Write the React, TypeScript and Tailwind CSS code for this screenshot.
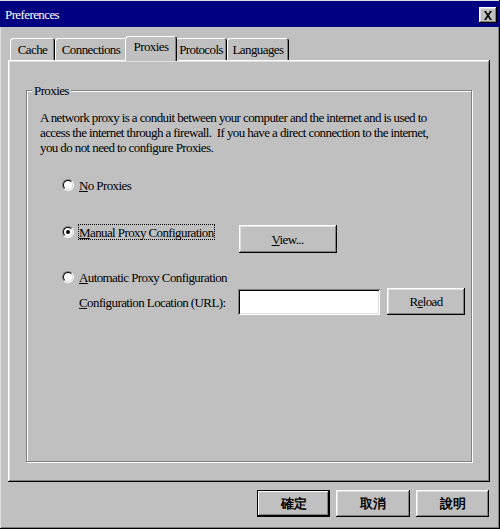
import React from "react";

const raised =
  "shadow-[inset_-1px_-1px_0_#000,inset_1px_1px_0_#fff,inset_-2px_-2px_0_#808080,inset_2px_2px_0_#dfdfdf]";

function Radio({ checked }: { checked?: boolean }) {
  return (
    <div className="w-[12px] h-[12px] rounded-full border border-t-[#808080] border-l-[#808080] border-r-white border-b-white shrink-0">
      <div className="w-full h-full rounded-full border border-t-black border-l-black border-r-[#dfdfdf] border-b-[#dfdfdf] bg-white flex items-center justify-center">
        {checked && <div className="w-[4px] h-[4px] rounded-full bg-black" />}
      </div>
    </div>
  );
}

function Tab({ label, w, selected }: { label: string; w: string; selected?: boolean }) {
  if (selected) {
    return (
      <div
        className={`${w} h-[25px] -mx-[2px] -mb-[1px] relative z-10 bg-[#c0c0c0] rounded-t-[3px] shadow-[inset_1px_1px_0_#fff,inset_-1px_0_0_#000,inset_-2px_0_0_#808080] flex items-start justify-center pt-[3px] text-[13px] leading-[15px] text-black`}
      >
        {label}
      </div>
    );
  }
  return (
    <div
      className={`${w} h-[22px] bg-[#c0c0c0] rounded-t-[3px] shadow-[inset_1px_1px_0_#fff,inset_-1px_0_0_#000,inset_-2px_0_0_#808080] flex items-start justify-center pt-[4px] text-[13px] leading-[15px] text-black`}
    >
      {label}
    </div>
  );
}

function Button({ children, className = "", def }: { children: React.ReactNode; className?: string; def?: boolean }) {
  return (
    <div
      className={`bg-[#c0c0c0] flex items-center justify-center text-black ${
        def
          ? "shadow-[inset_0_0_0_1px_#000,inset_-2px_-2px_0_#000,inset_2px_2px_0_#fff,inset_-3px_-3px_0_#808080]"
          : raised
      } ${className}`}
    >
      {children}
    </div>
  );
}

export default function App() {
  return (
    <div className="w-[500px] h-[529px] bg-[#c0c0c0] flex flex-col font-[family-name:Liberation_Serif,serif] tracking-[-0.6px] shadow-[inset_-1px_-1px_0_#000,inset_1px_1px_0_#dfdfdf,inset_-2px_-2px_0_#808080] overflow-hidden">
      {/* Title bar */}
      <div className="h-[26px] mt-[1px] bg-[#000080] flex items-center justify-between pl-[5px] pr-[3px] shrink-0">
        <span className="text-white text-[13px] leading-[15px]">Preferences</span>
        <div className={`w-[18px] h-[16px] mt-[2px] ${raised} bg-[#c0c0c0] flex items-center justify-center`}>
          <svg width="10" height="9" viewBox="0 0 10 9">
            <path d="M1 0h2l2 3 2-3h2L6 4.5 9 9H7L5 6 3 9H1l3-4.5z" fill="#000" />
          </svg>
        </div>
      </div>

      {/* Tabs */}
      <div className="flex items-end h-[24px] mt-[9px] ml-[10px] relative z-10">
        <Tab label="Cache" w="w-[45px]" />
        <Tab label="Connections" w="w-[72px]" />
        <Tab label="Proxies" w="w-[52px]" selected />
        <Tab label="Protocols" w="w-[52px]" />
        <Tab label="Languages" w="w-[62px]" />
      </div>

      {/* Panel */}
      <div className={`ml-[8px] w-[482px] h-[422px] bg-[#c0c0c0] ${raised} pt-[30px] px-[18px] shrink-0`}>
        <div className="relative h-[372px] border border-[#808080] shadow-[1px_1px_0_#fff,inset_1px_1px_0_#fff] pt-[19px] pl-[13px] text-black">
          <div className="absolute -top-[8px] left-[5px] bg-[#c0c0c0] px-[2px] text-[13px] leading-[15px]">
            Proxies
          </div>
          <p className="text-[13px] leading-[15px] w-[400px]">
            A network proxy is a conduit between your computer and the internet and is used to access the internet
            through a firewall.&nbsp; If you have a direct connection to the internet, you do not need to configure
            Proxies.
          </p>

          <div className="ml-[22px] text-[13px] leading-[15px]">
            <div className="flex items-center h-[20px] mt-[20px]">
              <Radio />
              <span className="ml-[5px]">
                <u>N</u>o Proxies
              </span>
            </div>

            <div className="flex items-start h-[29px] mt-[29px]">
              <div className="h-[16px] flex items-center">
                <Radio checked />
              </div>
              <span className="ml-[4px] h-[16px] px-[1px] outline-1 outline-dotted outline-black -outline-offset-1 flex items-center">
                <u>M</u>anual Proxy Configuration
              </span>
              <Button className="ml-[24px] mt-[1px] w-[98px] h-[28px]">
                <span>
                  <u>V</u>iew...
                </span>
              </Button>
            </div>

            <div className="flex items-center h-[16px] mt-[16px]">
              <Radio />
              <span className="ml-[5px]">
                <u>A</u>utomatic Proxy Configuration
              </span>
            </div>

            <div className="flex items-start h-[27px] mt-[3px]">
              <span className="ml-[17px] mt-[7px] whitespace-nowrap">
                <u>C</u>onfiguration Location (URL):
              </span>
              <div className="ml-auto" />
              <div className="w-[142px] h-[26px] mt-[1px] shrink-0 bg-white shadow-[inset_1px_1px_0_#808080,inset_-1px_-1px_0_#fff,inset_2px_2px_0_#000,inset_-2px_-2px_0_#dfdfdf]" />
              <Button className="ml-[7px] w-[78px] h-[27px] mr-[6px] shrink-0">
                <span>
                  R<u>e</u>load
                </span>
              </Button>
            </div>
          </div>
        </div>
      </div>

      {/* Bottom buttons */}
      <div className="flex justify-end gap-[6px] mt-[8px] pr-[11px] font-sans tracking-normal text-[13px] font-bold">
        <Button def className="w-[73px] h-[27px]">確定</Button>
        <Button className="w-[74px] h-[27px]">取消</Button>
        <Button className="w-[73px] h-[27px]">說明</Button>
      </div>
    </div>
  );
}
